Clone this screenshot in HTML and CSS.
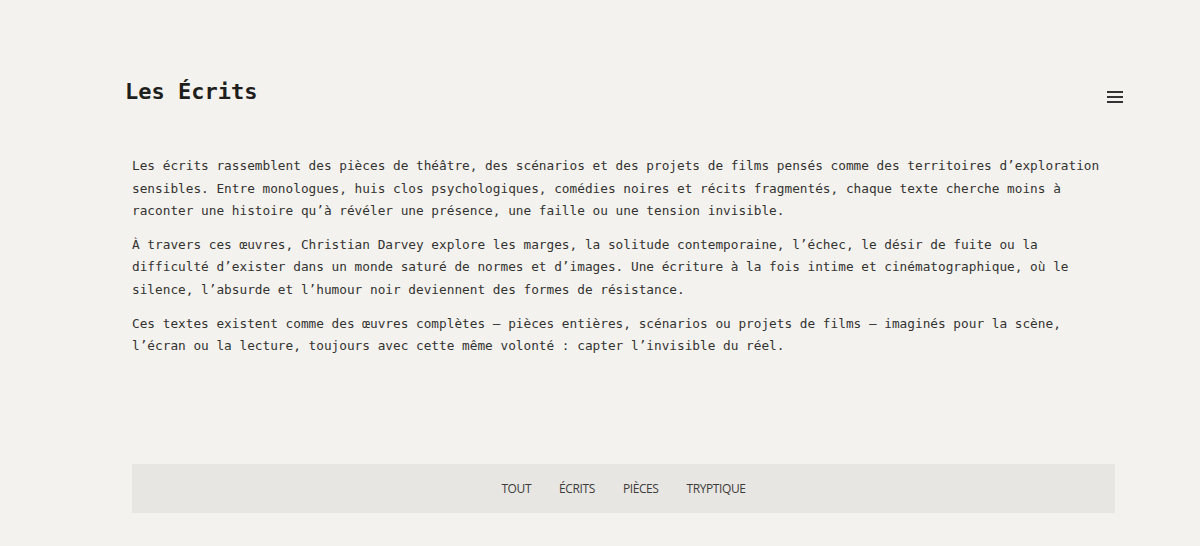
FILE: index.html
```html
<!DOCTYPE html>
<html lang="fr">
<head>
  <meta charset="UTF-8">
  <title>Les Écrits — Christian Darvey</title>
  <link rel="stylesheet" href="styles.css">
</head>
<body>
  <div class="page">
    <header class="site-header">
      <h1 class="site-title">Les Écrits</h1>
      <button class="menu-toggle" aria-label="Menu">
        <span></span>
        <span></span>
        <span></span>
      </button>
    </header>

    <section class="intro">
      <p>Les écrits rassemblent des pièces de théâtre, des scénarios et des projets de films pensés comme des territoires d’exploration sensibles. Entre monologues, huis clos psychologiques, comédies noires et récits fragmentés, chaque texte cherche moins à raconter une histoire qu’à révéler une présence, une faille ou une tension invisible.</p>
      <p>À travers ces œuvres, Christian Darvey explore les marges, la solitude contemporaine, l’échec, le désir de fuite ou la difficulté d’exister dans un monde saturé de normes et d’images. Une écriture à la fois intime et cinématographique, où le silence, l’absurde et l’humour noir deviennent des formes de résistance.</p>
      <p>Ces textes existent comme des œuvres complètes — pièces entières, scénarios ou projets de films — imaginés pour la scène, l’écran ou la lecture, toujours avec cette même volonté : capter l’invisible du réel.</p>
    </section>

    <nav class="filters">
      <a href="#" class="filter">Tout</a>
      <a href="#" class="filter">Écrits</a>
      <a href="#" class="filter">Pièces</a>
      <a href="#" class="filter">Tryptique</a>
    </nav>

    <section class="works"></section>
  </div>
</body>
</html>
```

FILE: styles.css
```css
html {
  background: #f4f2ee;
}

body {
  margin: 0;
  padding: 0;
  font-family: "DejaVu Sans Mono", "Liberation Mono", monospace;
  color: #333331;
  background: #f4f2ee;
}

.page {
  width: 983px;
  margin-left: 132px;
  padding-top: 76px;
}

.site-header {
  display: flex;
  align-items: center;
  justify-content: space-between;
  margin: 0 -8px 0 -7px;
}

.site-title {
  margin: 0;
  font-size: 22px;
  font-weight: 700;
  line-height: 32px;
  color: #1e1e1c;
}

.menu-toggle {
  display: flex;
  flex-direction: column;
  gap: 3px;
  width: 16px;
  padding: 0;
  margin-top: 10px;
  border: none;
  background: none;
  cursor: pointer;
}

.menu-toggle span {
  display: block;
  height: 2px;
  background: #333;
}

.intro {
  padding-top: 47px;
}

.intro p {
  margin: 0 0 11px 0;
  font-size: 12.75px;
  line-height: 22.6px;
}

.filters {
  display: flex;
  justify-content: center;
  gap: 28px;
  margin-top: 106px;
  height: 49px;
  align-items: center;
  background: #e8e6e2;
}

.filter {
  font-family: "Open Sans", "Noto Sans", sans-serif;
  font-size: 12px;
  letter-spacing: -0.4px;
  text-transform: uppercase;
  text-decoration: none;
  color: #3c3c3a;
}

.works {
  min-height: 500px;
}
```
